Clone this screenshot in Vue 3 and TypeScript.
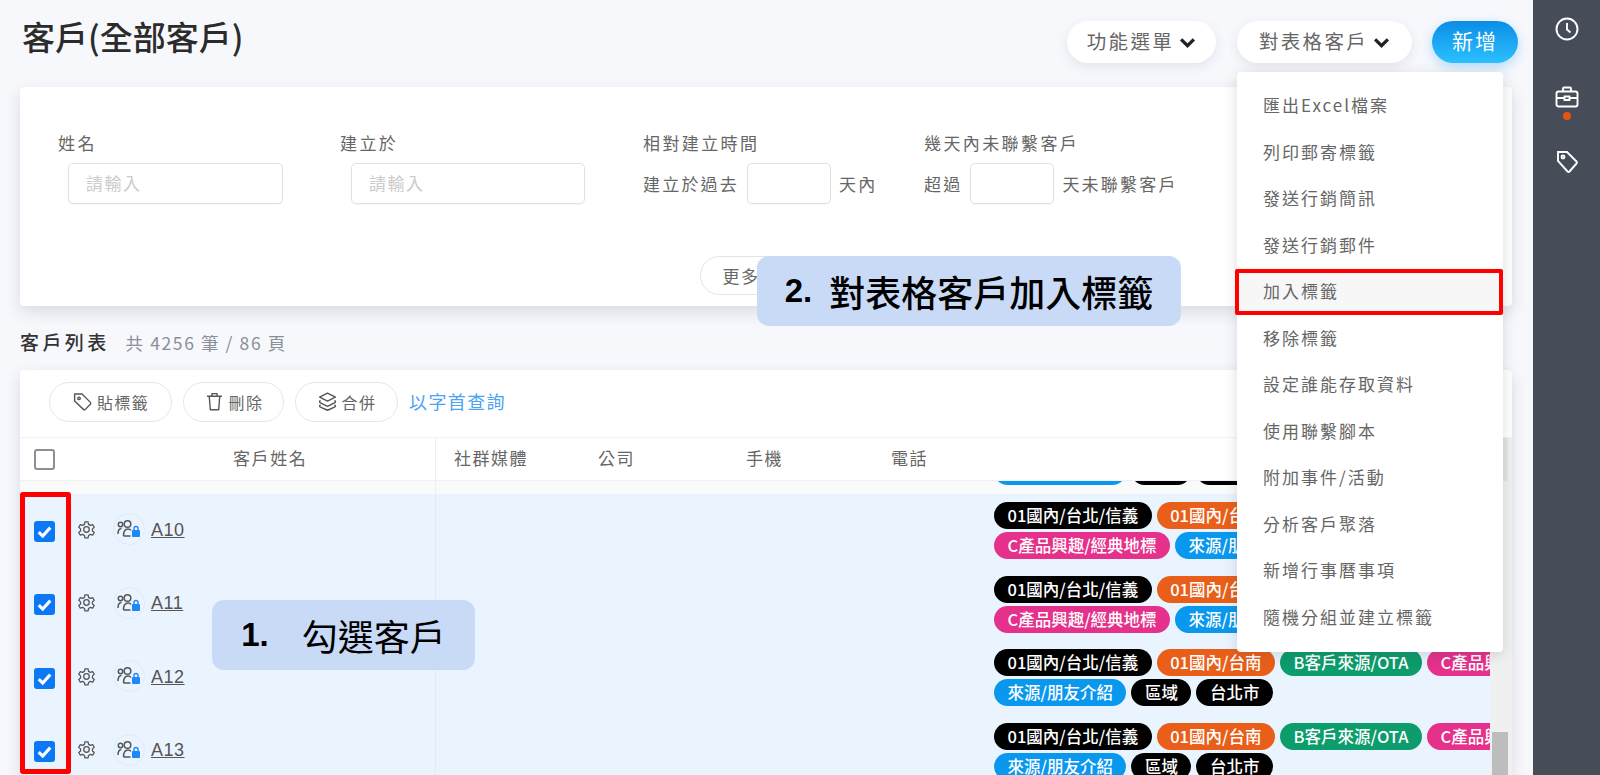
<script setup lang="ts">
type Tag = { text: string; color: string }

const black = '#000'
const orange = '#e95f1a'
const green = '#0d9c6b'
const pink = '#e5318b'
const blue = '#0a98ee'

const menuItems = [
  '匯出Excel檔案', '列印郵寄標籤', '發送行銷簡訊', '發送行銷郵件', '加入標籤', '移除標籤',
  '設定誰能存取資料', '使用聯繫腳本', '附加事件/活動', '分析客戶聚落', '新增行事曆事項', '隨機分組並建立標籤'
]

const tagA: Tag = { text: '01國內/台北/信義', color: black }
const tagB: Tag = { text: '01國內/台南', color: orange }
const tagC: Tag = { text: 'B客戶來源/OTA', color: green }
const tagD: Tag = { text: 'C產品興趣/經典地標', color: pink }
const tagE: Tag = { text: '來源/朋友介紹', color: blue }
const tagF: Tag = { text: '區域', color: black }
const tagG: Tag = { text: '台北市', color: black }

const rows: { name: string; lines: Tag[][] }[] = [
  { name: 'A10', lines: [[tagA, tagB, tagC], [tagD, tagE, tagF, tagG]] },
  { name: 'A11', lines: [[tagA, tagB, tagC], [tagD, tagE, tagF, tagG]] },
  { name: 'A12', lines: [[tagA, tagB, tagC, tagD], [tagE, tagF, tagG]] },
  { name: 'A13', lines: [[tagA, tagB, tagC, tagD], [tagE, tagF, tagG]] }
]
const peek = [tagE, tagF, tagG]
</script>

<template>
  <div class="page">
    <main class="main">
      <header class="head">
        <h1 class="title">客戶(全部客戶)</h1>
        <div class="actions">
          <button class="pill-btn">功能選單
            <svg class="chev" viewBox="0 0 16 10"><path d="M2 2l6 6 6-6" /></svg>
          </button>
          <div class="menu-wrap">
            <button class="pill-btn">對表格客戶
              <svg class="chev" viewBox="0 0 16 10"><path d="M2 2l6 6 6-6" /></svg>
            </button>
            <ul class="menu">
              <li v-for="item in menuItems" :key="item" :class="{ active: item === '加入標籤' }">{{ item }}</li>
            </ul>
          </div>
          <button class="add-btn">新增</button>
        </div>
      </header>

      <section class="filter card">
        <div class="fields">
          <div class="field f1">
            <label>姓名</label>
            <div class="box wide1">請輸入</div>
          </div>
          <div class="field f2">
            <label>建立於</label>
            <div class="box wide2">請輸入</div>
          </div>
          <div class="field f3">
            <label>相對建立時間</label>
            <div class="inline"><span>建立於過去</span><div class="box small" /><span>天內</span></div>
          </div>
          <div class="field">
            <label>幾天內未聯繫客戶</label>
            <div class="inline"><span>超過</span><div class="box small" /><span>天未聯繫客戶</span></div>
          </div>
        </div>
        <div class="more-row"><button class="more">更多條件</button></div>
      </section>

      <div class="list-head">
        <strong>客戶列表</strong>
        <span>共 4256 筆 / 86 頁</span>
      </div>

      <section class="list card">
        <div class="toolbar">
          <button class="tool t-tag">
            <svg viewBox="0 0 24 24"><path d="M3 3.500h8.500l9.500 9.500a1.600 1.600 0 0 1 0 2.200l-5.800 5.800a1.600 1.600 0 0 1-2.200 0L3 11.500z" /><circle cx="8" cy="8.500" r="1.400" /></svg>
            貼標籤
          </button>
          <button class="tool t-del">
            <svg viewBox="0 0 24 24"><path d="M3.500 6h17M9 6V3h6v3M6 6l1.200 15.500h9.600L18 6" /></svg>
            刪除
          </button>
          <button class="tool t-merge">
            <svg viewBox="0 0 24 24"><path d="M12 2.500l9 4.500-9 4.500L3 7zM4 10.800c-1.500 1-1.500 2 0 2.700l8 4 8-4c1.500-.7 1.500-1.700 0-2.700M4 15.800c-1.500 1-1.500 2 0 2.700l8 3.500 8-3.500c1.500-.7 1.500-1.700 0-2.700" /></svg>
            合併
          </button>
          <a class="alpha">以字首查詢</a>
        </div>

        <div class="table">
          <div class="table-main">
            <div class="thead">
              <div class="cell-name">
                <span class="check" />
                <span class="name-label">客戶姓名</span>
              </div>
              <div class="cols">
                <span class="col-a">社群媒體</span>
                <span class="col-b">公司</span>
                <span class="col-c">手機</span>
                <span>電話</span>
              </div>
            </div>
            <div class="strip">
              <div class="cell-name" />
              <div class="spacer" />
              <div class="tags peek">
                <div class="line">
                  <span v-for="t in peek" :key="t.text" class="tag" :style="{ background: t.color }">{{ t.text }}</span>
                </div>
              </div>
            </div>
            <div v-for="row in rows" :key="row.name" class="row">
              <div class="cell-name">
                <span class="check on">
                  <svg viewBox="0 0 20 20"><path d="M4.500 10.500l3.800 3.800 7.200-8" /></svg>
                </span>
                <svg class="gear" viewBox="0 0 24 24">
                  <path d="M10 2.500h4l.6 3 2.300 1.300 2.900-1 2 3.400-2.300 2v2.600l2.300 2-2 3.400-2.900-1-2.300 1.300-.6 3h-4l-.6-3-2.300-1.300-2.900 1-2-3.400 2.300-2v-2.600l-2.300-2 2-3.400 2.900 1 2.300-1.300z" />
                  <circle cx="12" cy="12" r="3.500" />
                </svg>
                <span class="avatar">
                  <svg viewBox="0 0 30 30">
                    <circle cx="6.500" cy="10.500" r="2.200" />
                    <circle cx="13.500" cy="10" r="3.300" />
                    <path d="M4 20c0-3 1.200-5.500 3.500-5.500M9.500 22c0-4.500 1.500-7 4.500-7 1.500 0 2.500.5 3 1.500M9.500 22h7" />
                    <rect class="lock" x="18" y="16" width="8" height="7" rx="1" />
                    <path class="shackle" d="M20 16v-1.500a2 2 0 0 1 4 0V16" />
                  </svg>
                </span>
                <a class="cust">{{ row.name }}</a>
              </div>
              <div class="spacer" />
              <div class="tags">
                <div v-for="(line, i) in row.lines" :key="i" class="line">
                  <span v-for="t in line" :key="t.text" class="tag" :style="{ background: t.color }">{{ t.text }}</span>
                </div>
              </div>
            </div>
          </div>
          <div class="scrollbar"><div class="bar-top" /><div class="thumb" /></div>
        </div>
      </section>

      <div class="red-box" />
      <div class="callout c1"><b>1.</b><span>勾選客戶</span></div>
      <div class="callout c2"><b>2.</b><span>對表格客戶加入標籤</span></div>
    </main>

    <aside class="side">
      <svg class="s-icon" viewBox="0 0 24 24"><circle cx="12" cy="12" r="10.500" /><path d="M12 6v6.500l3.500 3" /></svg>
      <svg class="s-icon brief" viewBox="0 0 24 24"><rect x="1.500" y="6.500" width="21" height="15" rx="2" /><path d="M8 6.500V3.500a1 1 0 0 1 1-1h6a1 1 0 0 1 1 1v3M1.500 13h8M14.500 13h8M9.500 11.500h5v3.500h-5z" /></svg>
      <span class="dot" />
      <svg class="s-icon tagi" viewBox="0 0 24 24"><path d="M3 2h9l9.500 9.500a1.500 1.500 0 0 1 0 2L14.500 21.500a1.500 1.500 0 0 1-2 0L3 11z" /><circle cx="8" cy="7" r="1.500" /></svg>
    </aside>
  </div>
</template>

<style>
html, body { margin: 0; background: #f7f8fc; }
</style>

<style scoped>
* { box-sizing: border-box; }
.page {
  display: flex;
  height: 775px;
  overflow: hidden;
  font-family: "Noto Sans CJK TC", "Noto Sans", sans-serif;
  color: #666;
}
button { font: inherit; cursor: pointer; }

.main { position: relative; flex: 1; min-width: 0; padding: 21px 21px 0 20px; background: #f7f8fc; }
.head { display: flex; justify-content: space-between; height: 42px; }
.title { margin: -7px 0 0 2px; font-size: 33px; line-height: 44px; font-weight: 500; color: #2b2b2b; }
.actions { display: flex; gap: 21px; margin-right: -6px; }
.menu-wrap { position: relative; z-index: 3; }
.pill-btn {
  display: flex; align-items: center; justify-content: center; gap: 5px;
  height: 42px; padding: 0 20px 3px; border: 0; border-radius: 21px;
  background: #fff; color: #666; font-size: 19.500px; letter-spacing: 2.300px;
  box-shadow: 0 4px 12px rgba(60, 70, 100, .1);
}
.menu-wrap .pill-btn { width: 175px; }
.chev { width: 17px; height: 11px; margin-top: 3px; fill: none; stroke: #222; stroke-width: 3; }
.add-btn {
  width: 86px; height: 42px; padding: 0 0 4px; border: 0; border-radius: 21px; margin-left: -1px;
  background: linear-gradient(180deg, #0b8de6, #2cc0ff); color: #fff; font-size: 21px; letter-spacing: 2px;
  box-shadow: 0 4px 12px rgba(20, 150, 240, .3);
}
.menu {
  position: absolute; top: 51px; left: 0; width: 266px; margin: 0; padding: 10px 0 12px; list-style: none;
  background: #fff; border-radius: 4px; box-shadow: 0 3px 14px rgba(40, 50, 70, .16);
}
.menu li {
  position: relative; height: 46.500px; line-height: 46.500px; padding-left: 26px;
  font-size: 17px; letter-spacing: 2px; color: #666;
}
.menu li.active { background: #f7f7f7; }
.menu li.active::after {
  content: ""; position: absolute; inset: 1px 0 0 -2px; border: 4px solid #f00; border-radius: 2px;
}

.card { background: #fff; border-radius: 4px; box-shadow: 0 6px 16px rgba(40, 50, 70, .14); }
.filter { margin-top: 24px; height: 219px; padding-top: 44px; }
.fields { display: flex; padding-left: 38px; }
.field label { display: block; height: 24px; line-height: 24px; margin-bottom: 8px; font-size: 17px; letter-spacing: 2.400px; color: #666; }
.f1 { width: 282px; }
.f2 { width: 303px; }
.f3 { width: 281px; }
.box {
  height: 41px; line-height: 37px; padding-left: 17px; border: 1px solid #dfe1e6; border-radius: 5px;
  background: #fff; color: #cbcbcb; font-size: 17px; letter-spacing: 1.500px;
  box-shadow: 0 1px 1px rgba(0, 0, 0, .04);
}
.wide1 { width: 215px; margin-left: 10px; }
.wide2 { width: 234px; margin-left: 11px; }
.small { width: 84px; }
.inline { display: flex; align-items: center; gap: 8px; font-size: 17px; letter-spacing: 2.200px; }
.more-row { display: flex; justify-content: center; margin-top: 52px; padding-right: 12px; }
.more { width: 121px; height: 39px; padding: 0 0 0 22px; text-align: left; border: 1px solid #e2e4e8; border-radius: 20px; background: #fff; color: #666; font-size: 17px; letter-spacing: 1.500px; }

.list-head { display: flex; align-items: baseline; gap: 17px; height: 64px; padding-top: 22px; }
.list-head strong { font-size: 19px; font-weight: 500; letter-spacing: 3.400px; color: #333; }
.list-head span { font-size: 17.500px; letter-spacing: 1.600px; color: #8a8f99; margin-left: -1px; }

.list { height: 405px; overflow: hidden; border-radius: 4px 4px 0 0; }
.toolbar { display: flex; align-items: center; gap: 11px; height: 68px; padding-left: 29px; padding-bottom: 4px; border-bottom: 1px solid #f3f3f3; }
.tool {
  display: flex; align-items: center; justify-content: center; gap: 4px;
  height: 40px; padding: 0; border: 1.500px solid #e6e6e6; border-radius: 20px; background: #fff;
  color: #666; font-size: 16px; letter-spacing: 1.400px; white-space: nowrap;
}
.t-tag { width: 123px; }
.t-del { width: 101px; }
.t-merge { width: 103px; }
.tool svg { width: 21px; height: 21px; fill: none; stroke: #555; stroke-width: 1.600; stroke-linejoin: round; }
.alpha { color: #4aa3f5; font-size: 18px; letter-spacing: 1.400px; margin-bottom: 2px; }

.table { display: flex; }
.table-main { flex: 0 0 1470px; min-width: 0; }
.scrollbar { position: relative; width: 22px; height: 340px; background: #f0f0f0; }
.bar-top { height: 43px; width: 18px; background: #e4e4e4; }
.thumb { position: absolute; top: 294px; left: 2px; width: 16px; height: 60px; background: #bdbdbd; }
.thead { display: flex; height: 43px; border-bottom: 1px solid #f0f0f0; }
.cell-name { position: relative; display: flex; align-items: center; flex: 0 0 416px; padding-left: 14px; border-right: 1px solid #f0f0f0; }
.row .cell-name { border-right-color: #e2ecf7; }
.name-label { margin: 0 0 3px 178px; font-size: 17px; letter-spacing: 1.600px; color: #666; }
.cols { display: flex; align-items: center; padding: 0 0 3px 18px; font-size: 17px; letter-spacing: 1.500px; color: #666; }
.col-a { width: 144px; }
.col-b { width: 148px; }
.col-c { width: 145px; }
.check { display: flex; width: 21px; height: 21px; border: 2px solid #8f8f8f; border-radius: 3px; background: #fff; flex: none; }
.check.on { border: 0; background: #0b78f5; margin-top: 1px; }
.check svg { width: 21px; height: 21px; fill: none; stroke: #fff; stroke-width: 3; }
.strip { display: flex; height: 13px; overflow: hidden; background: #fafafa; }
.spacer { flex: 0 0 558px; }
.row { display: flex; height: 73.500px; background: #eaf4ff; }
.gear { width: 19px; height: 19px; margin: 0 0 3px 22px; fill: none; stroke: #555; stroke-width: 1.600; stroke-linejoin: round; flex: none; }
.avatar { display: flex; width: 32px; height: 32px; margin: 0 0 3px 17px; border: 1px solid #dfeafa; border-radius: 50%; flex: none; }
.avatar svg { width: 30px; height: 30px; fill: none; stroke: #555; stroke-width: 1.500; }
.avatar .lock { fill: #1e88f5; stroke: none; }
.avatar .shackle { stroke: #1e88f5; stroke-width: 1.400; }
.cust { margin: 0 0 1px 6px; font-family: "Liberation Sans", sans-serif; font-size: 18px; letter-spacing: .5px; text-decoration: underline; color: #555; }
.tags { flex: 1; min-width: 0; display: flex; flex-direction: column; justify-content: center; gap: 3px; overflow: hidden; }
.tags.peek { justify-content: flex-start; margin-top: -23px; }
.line { display: flex; gap: 5px; white-space: nowrap; }
.tag {
  flex: none; height: 27px; line-height: 26px; padding: 0 13.500px; border-radius: 14px;
  color: #fff; font-size: 16.500px; font-weight: 500; letter-spacing: 0;
}

.red-box { position: absolute; left: 20px; top: 492px; width: 51px; height: 282px; border: 5px solid #f00; border-radius: 3px; pointer-events: none; }
.callout {
  position: absolute; display: flex; align-items: center; justify-content: center;
  height: 70px; border-radius: 12px; background: #c9daf6; color: #000;
  font-family: "Liberation Sans", "Noto Sans CJK TC", sans-serif; font-size: 36px;
}
.callout b { font-size: 33px; }
.c1 { left: 212px; top: 600px; width: 263px; gap: 33px; }
.c2 { left: 757px; top: 256px; width: 424px; gap: 17px; font-weight: 500; }

.side { position: relative; flex: 0 0 67px; display: flex; flex-direction: column; align-items: center; padding-top: 17px; background: #474d58; }
.s-icon { width: 24px; height: 24px; fill: none; stroke: #fff; stroke-width: 1.900; }
.brief { margin-top: 44px; }
.dot { width: 8px; height: 8px; margin-top: 3px; border-radius: 50%; background: #e8540f; }
.tagi { margin-top: 30px; }
</style>
